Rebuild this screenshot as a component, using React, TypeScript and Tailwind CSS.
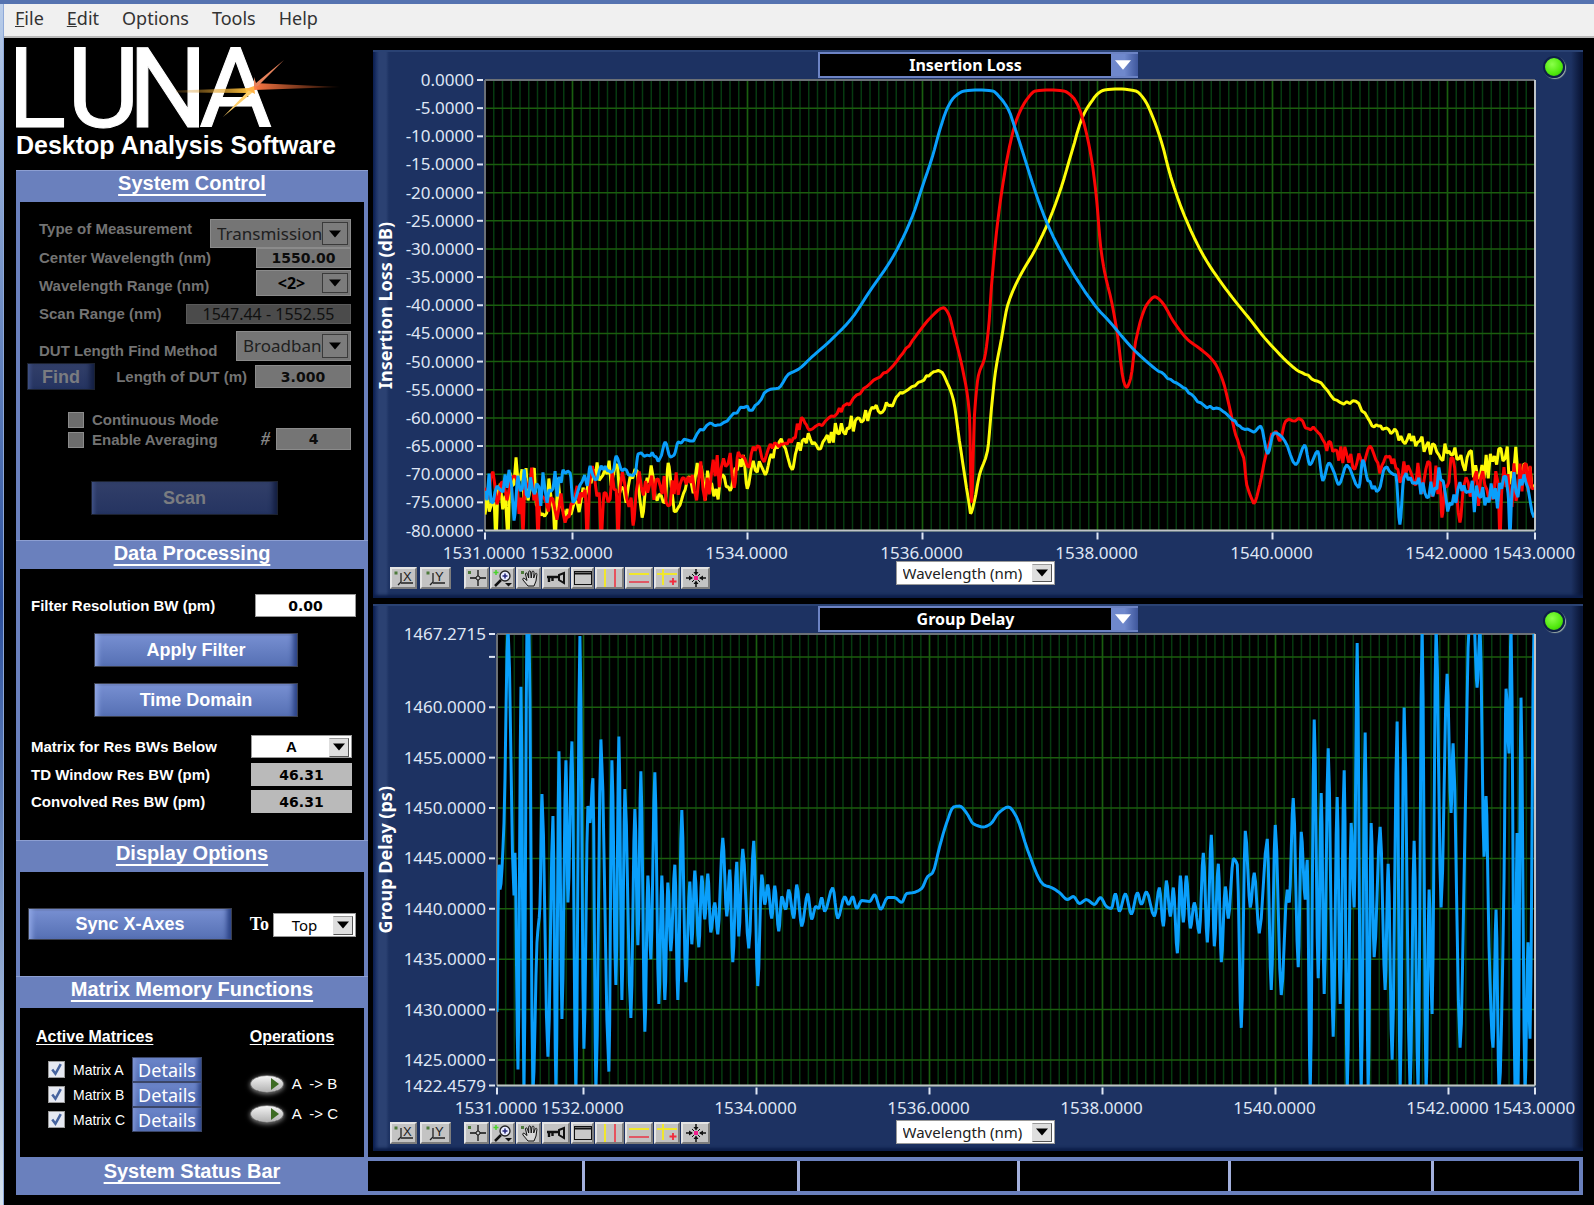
import React from "react";

type Anchor = [number, number, number?];

const BLUE = "#0a9ffb";
const RED = "#fb0505";
const YELLOW = "#fdfb08";

// Fills the space between anchors; the third value is the noise height.
// Quiet stretches are joined with a monotone cubic so peaks never overshoot.
const buildTrace = (anchors: Anchor[], seed: number) => {
  let state = seed;
  const random = () => {
    state = (state * 1103515245 + 12345) % 2147483648;
    return state / 2147483648;
  };
  const slopes = anchors.slice(1).map(([x, y], i) => (y - anchors[i][1]) / (x - anchors[i][0]));
  const tangent = (i: number) => {
    const before = slopes[i - 1];
    const after = slopes[i];
    if (before === undefined || after === undefined || before * after <= 0) return 0;
    return (2 * before * after) / (before + after);
  };
  const points: string[] = [];
  anchors.forEach(([x, y, amp = 0], index) => {
    points.push(`${x},${y}`);
    const next = anchors[index + 1];
    if (!next) return;
    const width = next[0] - x;
    const steps = amp > 2 ? Math.floor(width / 2) : Math.max(4, Math.floor(width / 3));
    for (let i = 1; i < steps; i++) {
      const t = i / steps;
      const px = x + width * t;
      const h00 = 2 * t ** 3 - 3 * t ** 2 + 1;
      const h10 = t ** 3 - 2 * t ** 2 + t;
      const h01 = -2 * t ** 3 + 3 * t ** 2;
      const h11 = t ** 3 - t ** 2;
      const smooth = h00 * y + h10 * width * tangent(index) + h01 * next[1] + h11 * width * tangent(index + 1);
      const py = smooth + (random() * 2 - 1) * amp * 1.3;
      points.push(`${px.toFixed(1)},${py.toFixed(1)}`);
    }
  });
  return points.join(" ");
};

const matrixA: Anchor[] = [
  [0, 413, 14], [22, 410, 14], [24, 392, 10], [29, 443, 0], [33, 398, 14], [60, 412, 14], [76, 405, 0],
  [78, 392, 6], [85, 395, 0], [88, 425, 0], [97, 404, 8], [102, 408, 0], [105, 388, 5], [110, 402, 5],
  [118, 392, 7], [128, 393, 0], [131, 378, 0], [137, 393, 3], [150, 395, 0], [153, 376, 2], [165, 378, 3],
  [175, 380, 0], [180, 364, 0], [185, 379, 0], [189, 377, 0], [193, 364, 2], [205, 363, 2], [225, 345, 1],
  [232, 347, 2], [245, 339, 2], [262, 328, 0], [264, 332, 1], [285, 311, 0], [293, 310, 0], [303, 296, 0],
  [313, 291, 0], [326, 279, 0], [345, 262], [366, 240], [384, 213], [408, 177], [427, 137], [437, 107],
  [447, 77], [455, 48], [462, 28], [469, 17], [479, 11], [493, 10], [507, 11], [514, 17], [523, 30],
  [530, 50], [538, 75], [550, 113], [562, 145], [574, 170], [593, 203], [612, 230], [624, 243], [639, 261],
  [650, 273], [673, 293, 1], [697, 309, 1], [718, 327, 2], [737, 333], [747, 342, 2], [756, 350, 2],
  [768, 354], [775, 348], [782, 376], [788, 355, 1], [799, 363], [810, 387], [819, 367], [824, 387],
  [832, 373], [837, 403], [843, 385], [848, 394], [853, 407], [861, 387], [873, 410], [877, 382],
  [882, 403, 3], [893, 412], [899, 390, 4], [910, 397], [914, 447], [918, 400, 9], [929, 405, 11],
  [941, 420, 11], [955, 402, 11], [964, 425, 11], [980, 415, 15], [1001, 420, 15], [1022, 415],
  [1024, 456], [1026, 415, 14], [1040, 405], [1048, 440],
];

const matrixB: Anchor[] = [
  [0, 410, 14], [20, 412, 16], [36, 420], [38, 455], [40, 400, 14], [51, 415], [53, 460], [55, 415, 12],
  [74, 430, 14], [90, 418, 10], [100, 412], [102, 460], [105, 402, 12], [114, 415], [116, 460],
  [119, 415, 14], [131, 412], [133, 460], [135, 410, 14], [146, 420], [148, 448], [152, 408, 12],
  [175, 408, 16], [205, 405, 18], [222, 400, 14], [236, 390, 12], [245, 375, 8], [249, 410], [253, 374, 8],
  [262, 388, 5], [272, 368, 6], [279, 384, 4], [285, 366, 4], [298, 366, 5], [308, 360, 6], [318, 341, 2],
  [324, 352, 2], [340, 343, 2], [352, 335, 3], [368, 320, 2], [385, 305, 1], [408, 287, 1], [427, 262],
  [446, 238], [458, 229], [463, 235], [469, 257], [479, 300], [484, 337], [486, 425], [489, 337],
  [493, 297], [499, 280], [503, 250], [506, 207], [511, 153], [517, 107], [524, 67], [531, 40], [541, 20],
  [550, 11], [564, 10], [578, 11], [587, 17], [593, 27], [600, 50], [606, 80], [611, 120], [615, 167],
  [619, 193], [626, 223], [632, 257], [638, 303], [641, 309], [645, 300], [650, 263], [659, 230],
  [664, 222], [669, 218], [676, 223], [688, 243], [702, 261], [714, 270], [728, 283], [737, 302],
  [744, 330], [750, 357, 2], [758, 380], [761, 407, 3], [768, 426], [774, 407], [780, 378, 3], [790, 353],
  [794, 363], [800, 343, 2], [816, 342], [820, 350, 2], [830, 352, 2], [839, 365, 5], [849, 372, 8],
  [861, 377, 8], [877, 386], [884, 368], [892, 385, 8], [910, 390, 12], [934, 400, 14], [954, 402],
  [956, 440], [959, 408, 16], [967, 380], [974, 445], [978, 408, 17], [1001, 412, 18], [1012, 405],
  [1014, 460], [1016, 410, 20], [1048, 410],
];

const matrixC: Anchor[] = [
  [0, 437], [2, 415, 14], [9, 425], [11, 460], [13, 415, 12], [20, 418], [23, 460], [25, 395, 16],
  [45, 412, 20], [68, 430], [70, 460], [73, 400, 16], [80, 440, 10], [92, 425, 14], [110, 400, 14],
  [128, 398, 14], [143, 410, 16], [152, 393, 10], [157, 440], [162, 400, 12], [180, 425], [183, 385],
  [187, 415, 12], [193, 430], [200, 412, 14], [218, 402, 16], [235, 402, 10], [245, 413], [250, 390, 10],
  [258, 377], [262, 411], [268, 383, 8], [280, 397], [286, 376, 8], [298, 367], [307, 392], [311, 373, 6],
  [325, 361, 4], [333, 371, 6], [342, 357, 8], [362, 350, 8], [374, 340, 6], [393, 333, 4], [405, 327, 3],
  [417, 315, 1], [436, 303, 1], [446, 295, 1], [455, 293], [462, 305], [468, 322], [474, 363],
  [481, 410, 6], [485, 436], [489, 423], [494, 397], [502, 373], [506, 330], [510, 293], [516, 260],
  [522, 227], [533, 200], [550, 170], [564, 140], [576, 107], [586, 73], [597, 37], [605, 23], [612, 14],
  [619, 10], [633, 9], [650, 11], [659, 20], [667, 37], [676, 63], [685, 97], [699, 137], [718, 177],
  [740, 210], [766, 243], [782, 263], [813, 293, 1], [832, 303, 1], [858, 326, 2], [870, 323, 2],
  [882, 340, 4], [901, 350, 4], [915, 358, 5], [934, 363, 7], [953, 377, 9], [963, 373, 10],
  [977, 387, 14], [996, 387, 12], [1017, 383, 18], [1034, 393, 14], [1048, 407],
];

const groupDelay: Anchor[] = [
  [0, 380], [1, 280], [2, 232], [3, 257], [7, 190], [11, -8], [17, 263], [18, 220], [21, 438], [24, 53],
  [27, 460], [30, -8], [32, -8], [36, 460], [40, 310], [43, 273], [45, 161], [51, 425], [56, 183],
  [59, 460], [62, 118], [65, 387], [69, 127], [71, 270], [75, 108], [79, 460], [83, 2], [87, 417],
  [91, 173], [93, 190], [96, 145], [99, 460], [104, 106], [112, 440], [115, 127], [119, 353], [122, 103],
  [125, 368], [128, 156], [134, 386], [138, 176], [141, 313], [144, 138], [148, 400], [151, 243],
  [154, 327], [158, 139], [162, 372], [165, 243], [168, 368], [171, 250], [174, 319], [178, 232],
  [181, 368], [185, 177], [189, 350], [193, 249], [195, 312], [198, 238], [202, 315], [205, 243],
  [208, 287], [211, 241], [214, 300], [218, 270], [221, 302], [226, 205], [230, 284], [233, 237],
  [236, 330], [240, 229], [242, 304], [246, 216], [252, 316], [257, 208], [261, 354], [265, 242],
  [268, 272], [271, 252], [275, 286], [278, 253], [282, 299], [285, 264], [289, 277], [292, 257],
  [297, 286], [300, 252], [305, 294], [311, 261], [315, 287], [319, 274], [322, 276], [325, 265],
  [328, 279], [336, 255], [341, 286], [348, 264], [352, 272], [356, 264], [360, 276], [365, 268],
  [373, 269], [378, 262], [384, 277], [391, 265], [398, 265], [405, 270], [410, 261], [417, 260],
  [425, 256], [431, 244], [436, 240], [443, 214], [450, 190], [457, 174], [463, 173], [470, 180],
  [477, 191], [487, 194], [494, 191], [502, 180], [512, 174], [520, 184], [531, 217], [547, 252],
  [555, 255], [563, 260], [571, 267], [577, 264], [583, 271], [590, 267], [598, 272], [604, 265],
  [610, 274], [615, 276], [619, 261], [623, 279], [629, 261], [635, 282], [641, 260], [645, 272],
  [650, 259], [658, 284], [663, 255], [667, 294], [670, 248], [674, 284], [677, 255], [681, 321],
  [684, 243], [687, 290], [690, 243], [694, 296], [698, 270], [703, 301], [707, 220], [711, 310],
  [715, 202], [718, 314], [722, 231], [725, 330], [729, 254], [732, 286], [737, 226], [741, 232],
  [745, 396], [749, 198], [754, 275], [758, 240], [763, 301], [771, 206], [775, 358], [779, 192],
  [785, 363], [791, 257], [793, 270], [797, 165], [802, 335], [805, 199], [809, 267], [811, 227],
  [814, 460], [818, 86], [822, 346], [825, 160], [828, 362], [832, 115], [837, 405], [841, 164],
  [844, 372], [848, 137], [851, 460], [855, 190], [858, 275], [861, 9], [865, 460], [869, 99], [872, 460],
  [875, 190], [878, 325], [884, 194], [889, 358], [892, 231], [896, 428], [901, 88], [904, 460],
  [908, 74], [914, 460], [918, 208], [922, 460], [926, -8], [930, 460], [933, 257], [936, 382],
  [940, -8], [945, 275], [951, 40], [955, 180], [957, 110], [964, 416], [969, 190], [973, -8], [978, -8],
  [981, 54], [984, -8], [988, 224], [990, 163], [993, 315], [997, 416], [1000, 277], [1003, 460],
  [1008, 247], [1010, 55], [1013, 120], [1015, -8], [1019, 460], [1021, 200], [1022, 460], [1025, 64],
  [1029, 460], [1032, 310], [1034, 407], [1038, -8],
];

const wavelengths = [1531, 1532, 1534, 1536, 1538, 1540, 1542, 1543];
const minorLines = Array.from({ length: 119 }, (_, i) => ((i + 1) / 120) * 100);

/* ---------- Controls ---------- */

const Arrow = ({ className = "" }: { className?: string }) => (
  <svg viewBox="0 0 12 8" className={`h-2 w-3 ${className}`} fill="currentColor">
    <path d="M0 0.5h12L6 7.5z" />
  </svg>
);

type DropDownProps = {
  id: string;
  value: string;
  label?: string;
  box: string;
  text: string;
  arrow: string;
  disabled?: boolean;
};

const DropDown = ({ id, value, label, box, text, arrow, disabled }: DropDownProps) => (
  <div className={`grid ${box}`}>
    <select
      id={id}
      aria-label={label}
      disabled={disabled}
      defaultValue={value}
      className={`col-start-1 row-start-1 w-full min-w-0 appearance-none disabled:opacity-100 ${text}`}
    >
      <option>{value}</option>
    </select>
    <span
      className={`pointer-events-none col-start-1 row-start-1 m-0.5 flex items-center justify-center justify-self-end border ${arrow}`}
    >
      <Arrow />
    </span>
  </div>
);

const BlueButton = ({ children, className = "" }: { children: React.ReactNode; className?: string }) => (
  <button
    type="button"
    className={`border border-[#3b3f4c] bg-linear-to-b from-[#7890d2] to-[#5670b4] text-lg leading-6 font-bold text-white shadow-[inset_7px_0_5px_-4px_#8fa6e4,inset_-7px_0_5px_-3px_#2c4386,inset_0_2px_0_#7288c4] ${className}`}
  >
    {children}
  </button>
);

const DimButton = ({ children, className = "" }: { children: React.ReactNode; className?: string }) => (
  <button
    type="button"
    disabled
    className={`border border-[#1c2230] bg-linear-to-b from-[#323f69] to-[#253461] text-lg leading-6 font-bold text-[#7a7c80] shadow-[inset_6px_0_4px_-4px_#43558a,inset_-7px_0_5px_-3px_#141f42] ${className}`}
  >
    {children}
  </button>
);

const SectionTitle = ({ children, className = "h-8" }: { children: React.ReactNode; className?: string }) => (
  <h2
    className={`border-t border-[#8d9fd2] bg-[#6a80bd] text-center text-xl leading-6 font-bold text-white underline decoration-2 underline-offset-4 ${className}`}
  >
    {children}
  </h2>
);

/* ---------- Sidebar ---------- */

const Logo = () => (
  <svg viewBox="0 0 330 84" className="h-[84px] w-[330px]" role="img" aria-label="Luna">
    <defs>
      <linearGradient id="flareLeft" x1="0" x2="1">
        <stop offset="0" stopColor="#c98a2a" stopOpacity="0.2" />
        <stop offset="1" stopColor="#ffc23c" />
      </linearGradient>
      <linearGradient id="flareRight" x1="0" x2="1">
        <stop offset="0" stopColor="#ff7a45" />
        <stop offset="1" stopColor="#b04a20" stopOpacity="0.2" />
      </linearGradient>
    </defs>
    <text x="-10 51 112 183" y="82" fontFamily="Roboto, sans-serif" fontSize="112" fill="#fff" stroke="#fff">
      LUNA
    </text>
    <path d="M160 45.500L235 43v5l-75-.5z" fill="url(#flareLeft)" />
    <path d="M207 72l27-28 3 3z" fill="#ffcf6a" />
    <path d="M238 38l86 4-86 3z" fill="url(#flareRight)" />
    <path d="M238 42V32l2 6 28-23-26 26z" fill="#e8835c" />
    <path d="M230 44l8-3 1 8z" fill="#ffb347" />
  </svg>
);

const dimLabel = "text-[15px] leading-5 font-bold text-[#737373]";
const label = "text-[15px] leading-5 font-bold text-white";
const dimSelect = "border border-[#8b8b8b] bg-[#757575] font-['Noto_Sans',sans-serif]";
const dimArrow = "w-[26px] border-[#3a3a3a] bg-[#7c7c7c] text-black";
const lightArrow = "w-5 border-l-transparent border-t-[#999] border-r-[#555] border-b-[#555] bg-[#dedede] text-black";
const dimInput =
  "min-w-0 border border-[#8b8b8b] bg-[#757575] text-center font-['DejaVu_Sans',sans-serif] text-sm font-bold text-[#0c0c0c]";
const resultInput =
  "h-[23px] w-[101px] bg-[#bababa] text-center font-['DejaVu_Sans',sans-serif] text-sm font-bold text-black";

const SystemControl = () => (
  <section>
    <SectionTitle>System Control</SectionTitle>
    <div className="mx-1 flex h-[338px] flex-col bg-black pt-[17px] pr-[13px] pl-[7px]">
      <div className="flex justify-between pl-3">
        <label htmlFor="type" className={dimLabel}>
          Type of Measurement
        </label>
        <DropDown
          id="type"
          value="Transmission"
          disabled
          box={`h-[29px] w-[141px] ${dimSelect}`}
          text="pl-1.5 text-[17px] text-[#202020]"
          arrow={dimArrow}
        />
      </div>
      <div className="flex items-center justify-between pl-3">
        <label htmlFor="center" className={dimLabel}>
          Center Wavelength (nm)
        </label>
        <input id="center" disabled defaultValue="1550.00" className={`${dimInput} h-5 w-[95px]`} />
      </div>
      <div className="mt-0.5 flex items-end justify-between pl-3">
        <label htmlFor="range" className={dimLabel}>
          Wavelength Range (nm)
        </label>
        <DropDown
          id="range"
          value="<2>"
          disabled
          box={`h-[26px] w-[95px] ${dimSelect}`}
          text="pr-6 text-center text-[16px] font-bold text-black"
          arrow={dimArrow}
        />
      </div>
      <div className="mt-2 flex items-center justify-between pl-3">
        <label htmlFor="scan-range" className={dimLabel}>
          Scan Range (nm)
        </label>
        <input
          id="scan-range"
          disabled
          defaultValue="1547.44 - 1552.55"
          className="h-5 w-[165px] border border-[#5a5a5a] bg-[#4b4b4b] text-center font-['Noto_Sans',sans-serif] text-base text-[#101010]"
        />
      </div>
      <div className="mt-[7px] flex items-end justify-between pl-3">
        <label htmlFor="dut" className={dimLabel}>
          DUT Length Find Method
        </label>
        <DropDown
          id="dut"
          value="Broadband"
          disabled
          box={`h-[30px] w-[115px] ${dimSelect}`}
          text="pl-1.5 text-[17px] text-[#202020]"
          arrow={dimArrow}
        />
      </div>
      <div className="mt-0.5 flex items-center justify-between">
        <DimButton className="h-[27px] w-[68px]">Find</DimButton>
        <label htmlFor="length" className={`${dimLabel} ml-auto pr-2`}>
          Length of DUT (m)
        </label>
        <input id="length" disabled defaultValue="3.000" className={`${dimInput} h-[23px] w-24`} />
      </div>
      <div className="mt-5 flex items-end justify-between pl-[41px]">
        <div className="flex flex-col">
          <label className={`flex items-center gap-2 ${dimLabel}`}>
            <input type="checkbox" disabled className="size-4 appearance-none border border-[#8b8b8b] bg-[#6c6c6c]" />
            Continuous Mode
          </label>
          <label className={`flex items-center gap-2 ${dimLabel}`}>
            <input type="checkbox" disabled className="size-4 appearance-none border border-[#8b8b8b] bg-[#6c6c6c]" />
            Enable Averaging
          </label>
        </div>
        <div className="flex items-center gap-1.5">
          <label htmlFor="count" className="font-['Liberation_Serif',serif] text-lg leading-5 font-bold text-[#858585] italic">
            #
          </label>
          <input id="count" disabled defaultValue="4" className={`${dimInput} h-[22px] w-[75px]`} />
        </div>
      </div>
      <DimButton className="mt-[31px] ml-16 h-[34px] w-[187px]">Scan</DimButton>
    </div>
  </section>
);

const DataProcessing = () => (
  <section>
    <SectionTitle className="h-[29px]">Data Processing</SectionTitle>
    <div className="mx-1 flex h-[271px] flex-col bg-black pt-[25px] pr-3 pl-[11px]">
      <div className="flex items-center justify-between">
        <label htmlFor="filter-bw" className={label}>
          Filter Resolution BW (pm)
        </label>
        <input
          id="filter-bw"
          defaultValue="0.00"
          className="-mr-1 h-[23px] w-[101px] border border-[#999] bg-white text-center font-['DejaVu_Sans',sans-serif] text-sm font-bold text-black"
        />
      </div>
      <BlueButton className="mt-4 ml-[63px] h-[34px] w-[204px]">Apply Filter</BlueButton>
      <BlueButton className="mt-4 ml-[63px] h-[34px] w-[204px]">Time Domain</BlueButton>
      <div className="mt-[18px] flex items-center justify-between">
        <label htmlFor="matrix" className={label}>
          Matrix for Res BWs Below
        </label>
        <DropDown
          id="matrix"
          value="A"
          box="h-[23px] w-[101px] border border-[#999] bg-white"
          text="pr-5 text-center text-[15px] font-bold text-black"
          arrow={lightArrow}
        />
      </div>
      <div className="mt-[5px] flex items-center justify-between">
        <label htmlFor="td-bw" className={label}>
          TD Window Res BW (pm)
        </label>
        <input id="td-bw" readOnly value="46.31" className={resultInput} />
      </div>
      <div className="mt-1 flex items-center justify-between">
        <label htmlFor="conv-bw" className={label}>
          Convolved Res BW (pm)
        </label>
        <input id="conv-bw" readOnly value="46.31" className={resultInput} />
      </div>
    </div>
  </section>
);

const DisplayOptions = () => (
  <section>
    <SectionTitle>Display Options</SectionTitle>
    <div className="mx-1 flex h-[104px] items-center bg-black pr-2 pl-2">
      <BlueButton className="h-8 w-[204px]">Sync X-Axes</BlueButton>
      <label htmlFor="sync-to" className="ml-auto pr-1 font-['Liberation_Serif',serif] text-lg font-bold text-white">
        To
      </label>
      <DropDown
        id="sync-to"
        value="Top"
        box="mt-0.5 h-6 w-[83px] border border-[#999] bg-white"
        text="pr-5 text-center font-['Noto_Sans',sans-serif] text-[15px] text-black"
        arrow={lightArrow}
      />
    </div>
  </section>
);

const Operation = ({ name }: { name: string }) => (
  <label className="flex items-center gap-2 text-[15px] leading-[30px] whitespace-pre text-white">
    <button
      type="button"
      aria-label={name}
      className="flex h-[18px] w-[34px] items-center justify-end rounded-[50%] border border-[#777] bg-linear-to-b from-[#f4f4f4] to-[#b2b2b2] pr-1 shadow-[0_1px_5px_#888]"
    >
      <svg viewBox="0 0 8 12" className="h-3 w-2" fill="#3c6b22">
        <path d="M0 0l8 6-8 6z" />
      </svg>
    </button>
    {name}
  </label>
);

const MatrixMemory = () => (
  <section>
    <SectionTitle>Matrix Memory Functions</SectionTitle>
    <div className="mx-1 flex h-[149px] justify-between bg-black pt-[17px] pr-[26px] pl-4">
      <div>
        <h3 className="text-base leading-6 font-bold text-white underline underline-offset-2">Active Matrices</h3>
        <ul className="mt-2 pl-3">
          {["A", "B", "C"].map((name) => (
            <li key={name} className="flex items-center">
              <label className="flex items-center gap-2 text-sm whitespace-nowrap text-white">
                <span className="grid">
                  <input
                    type="checkbox"
                    defaultChecked
                    className="col-start-1 row-start-1 size-[17px] appearance-none border border-[#9a9a9a] bg-[#e6e9f2]"
                  />
                  <svg
                    viewBox="0 0 16 16"
                    className="pointer-events-none col-start-1 row-start-1 size-[17px]"
                    fill="none"
                    stroke="#46639f"
                    strokeWidth="2.4"
                  >
                    <path d="M4 8l3 4 5-9" />
                  </svg>
                </span>
                <span className="w-[53px]">Matrix {name}</span>
              </label>
              <button
                type="button"
                className="ml-1.5 h-[25px] w-[70px] border border-[#3b4668] bg-linear-to-b from-[#6d86ca] to-[#526cb2] font-['Noto_Sans',sans-serif] text-lg leading-5 text-white shadow-[inset_4px_0_4px_-2px_#8197d6,inset_-5px_0_4px_-2px_#2f4789]"
              >
                Details
              </button>
            </li>
          ))}
        </ul>
      </div>
      <div>
        <h3 className="text-base leading-6 font-bold text-white underline underline-offset-2">Operations</h3>
        <div className="mt-5">
          <Operation name="A  -> B" />
          <Operation name="A  -> C" />
        </div>
      </div>
    </div>
  </section>
);

/* ---------- Graphs ---------- */

const toolClass =
  "h-[22px] border-2 border-t-[#e4e4e4] border-l-[#e4e4e4] border-r-[#7d7d7d] border-b-[#7d7d7d] bg-[#c3c3c3] flex items-center justify-center";

const AxisIcon = ({ axis }: { axis: string }) => (
  <svg viewBox="0 0 22 18" className="h-[18px] w-[22px]" fill="none" stroke="#222" strokeWidth="1.300">
    <rect x="1.500" y="2.500" width="3" height="3" fill="#4d7a3a" stroke="none" />
    <path d="M8 4v9M5 16l3-3M8 14h12" />
    <text x="10" y="12" fontSize="13" fontFamily="Liberation Sans, sans-serif" fill="#222" stroke="none">
      {axis}
    </text>
  </svg>
);

const tools: { name: string; width: string; icon: React.ReactNode }[] = [
  {
    name: "Cursor",
    width: "w-[25px]",
    icon: (
      <>
        <rect x="1" y="2" width="3" height="3" fill="#4d7a3a" />
        <path d="M11 1v16M3 9h16" stroke="#111" strokeWidth="1.300" />
        <circle cx="11" cy="9" r="2" fill="#c3c3c3" stroke="#111" />
      </>
    ),
  },
  {
    name: "Zoom",
    width: "w-[25px]",
    icon: (
      <>
        <path d="M3 1v5M0.500 3.500h5" stroke="#4ad32c" strokeWidth="1.500" />
        <path d="M8 11l-6 6" stroke="#111" strokeWidth="2.500" />
        <circle cx="12" cy="7" r="5" fill="#e8ebff" stroke="#222" strokeWidth="1.300" />
        <path d="M12 4.500v5M9.500 7h5" stroke="#22267a" strokeWidth="1.500" />
        <path d="M12 14h7l-3.500 3.500z" fill="#111" />
      </>
    ),
  },
  {
    name: "Pan",
    width: "w-[25px]",
    icon: (
      <>
        <rect x="2" y="2" width="3" height="3" fill="#4d7a3a" />
        <path
          d="M9 17l-5-6c-1-1.500.5-2.500 1.800-1.300L8 11.500 6.500 5c0-1.500 1.500-1.500 2 0l1.200 4L9.700 3c0-1.500 1.800-1.500 2 0l.5 6 .8-6c.2-1.300 2-1.200 2 .3L14.700 9l1.500-4c.5-1.300 2-.8 1.700.5L17 12l-2 5z"
          fill="#d6d6d6"
          stroke="#111"
        />
      </>
    ),
  },
  {
    name: "Lock",
    width: "w-[28px]",
    icon: (
      <>
        <path d="M1 8h13M3 8v5M6.500 8v4" stroke="#111" strokeWidth="2.400" />
        <path d="M13 6l5-2v10l-5-3z" fill="#c3c3c3" stroke="#111" strokeWidth="2" />
      </>
    ),
  },
  {
    name: "Window",
    width: "w-[23px]",
    icon: (
      <>
        <rect x="1.500" y="2.500" width="17" height="13" fill="#c9c9c9" stroke="#111" />
        <path d="M1 4.500h18" stroke="#111" strokeWidth="2" />
      </>
    ),
  },
  {
    name: "Vertical cursors",
    width: "w-[29px]",
    icon: (
      <>
        <path d="M5 0v18" stroke="#f0e72c" strokeWidth="2" />
        <path d="M15 0v18" stroke="#f22c3c" strokeWidth="1.500" />
      </>
    ),
  },
  {
    name: "Horizontal cursors",
    width: "w-[28px]",
    icon: (
      <>
        <path d="M0 5h20" stroke="#f0e72c" strokeWidth="2" />
        <path d="M0 13h20" stroke="#e83546" strokeWidth="1.500" />
      </>
    ),
  },
  {
    name: "Add cursor",
    width: "w-[26px]",
    icon: (
      <>
        <path d="M0 5h20M6 0v16" stroke="#f0e72c" strokeWidth="2" />
        <path d="M16 9v7M12.500 12.500h7" stroke="#f22c3c" strokeWidth="1.800" />
      </>
    ),
  },
  {
    name: "Center cursor",
    width: "w-[29px]",
    icon: (
      <>
        <path d="M10 0v5M10 13v5M0 9h6M14 9h6" stroke="#111" strokeWidth="1.500" />
        <path d="M7.500 3h5L10 6.500zM7.500 15h5L10 11.500zM3 6.500v5L7 9zM17 6.500v5L13 9z" fill="#111" />
        <path d="M6 5l8 8M14 5l-8 8" stroke="#111" />
        <rect x="8" y="7" width="4" height="4" fill="#f0208c" />
      </>
    ),
  },
];

type GraphProps = {
  id: string;
  title: string;
  axisLabel: string;
  top: number;
  bottom: number;
  yTicks: number[];
  hiddenTick?: number;
  frame: string;
  traces: { color: string; points: string }[];
  gutter: string;
  toolRow: string;
  toolPad: string;
};

const Graph = (props: GraphProps) => {
  const { id, title, axisLabel, top, bottom, yTicks, hiddenTick, frame, traces, gutter, toolRow, toolPad } = props;
  const yPos = (value: number) => `${((top - value) / (top - bottom)) * 100}%`;
  const xPos = (value: number) => `${((value - 1531) / 12) * 100}%`;

  return (
    <section className="flex min-h-[360px] flex-1 flex-col border-t-2 border-[#2a4273] bg-[linear-gradient(90deg,#0b1f54_0px,#2b4172_6px,#2b4172_13px,#1d3262_16px,#1d3262_calc(100%-12px),#06102e_100%)] shadow-[inset_0_-3px_3px_#0c1e4a]">
      <div className="grid h-[28px] grid-cols-[1fr_auto_1fr] items-start">
        <div className="col-start-2 grid h-[26px] w-80 border-t-2 border-b-2 border-l-2 border-[#6c83c4] bg-[#5d75b9]">
          <select
            aria-label={`${id} graph`}
            defaultValue={title}
            className="col-start-1 row-start-1 mr-[27px] appearance-none bg-black text-center font-['Noto_Sans',sans-serif] text-base leading-5 font-bold text-white"
          >
            <option>{title}</option>
          </select>
          <span className="pointer-events-none col-start-1 row-start-1 flex w-[27px] items-center justify-center justify-self-end bg-linear-to-r from-[#6f88cc] via-[#6f88cc] to-[#3f579c] pr-1">
            <Arrow className="h-3 w-4 text-white" />
          </span>
        </div>
        <span className="mt-1 mr-[18px] size-[22px] justify-self-end rounded-full border-2 border-[#0e1f49] bg-[radial-gradient(circle_at_40%_35%,#8bff4a,#4fe80c_60%,#2fae08)] shadow-[1px_1px_1px_#9fb0a8]" />
      </div>
      <div className="flex flex-1 pr-12 pl-[3px]">
        <div className="flex w-[18px] items-center justify-center">
          <span className="rotate-180 font-['Noto_Sans',sans-serif] text-lg leading-[18px] font-bold whitespace-nowrap text-white [writing-mode:vertical-rl]">
            {axisLabel}
          </span>
        </div>
        <svg
          className={`h-auto min-w-0 flex-1 overflow-visible ${gutter}`}
          fontFamily="Noto Sans, sans-serif"
          fontSize="17"
          fill="#dfe6f5"
        >
          <rect width="100%" height="100%" fill="#000" />
          {minorLines.map((x) => (
            <line key={x} x1={`${x}%`} x2={`${x}%`} y1="0" y2="100%" stroke="#063a10" strokeWidth="1.500" />
          ))}
          {yTicks.map((tick) => (
            <line key={tick} x1="0" x2="100%" y1={yPos(tick)} y2={yPos(tick)} stroke="#1b5d0e" strokeWidth="1.500" />
          ))}
          {wavelengths.map((tick) => (
            <line key={tick} x1={xPos(tick)} x2={xPos(tick)} y1="0" y2="100%" stroke="#1b5d0e" strokeWidth="1.500" />
          ))}
          <line x2="100%" stroke="#6b7076" strokeWidth="2" />
          <line y2="100%" stroke="#6b7076" strokeWidth="2" />
          <svg width="100%" height="100%" viewBox={frame} preserveAspectRatio="none">
            {traces.map((trace) => (
              <polyline
                key={trace.color}
                points={trace.points}
                fill="none"
                stroke={trace.color}
                strokeWidth="3"
                strokeLinejoin="bevel"
                vectorEffect="non-scaling-stroke"
              />
            ))}
          </svg>
          <line y1="100%" x2="100%" y2="100%" stroke="#bfc3c7" strokeWidth="2" />
          <line x1="100%" x2="100%" y2="100%" stroke="#bfc3c7" strokeWidth="2" />
          {yTicks.map((tick) => (
            <React.Fragment key={tick}>
              <line x1="-8" x2="-2" y1={yPos(tick)} y2={yPos(tick)} stroke="#dfe6f5" strokeWidth="2" />
              {tick !== hiddenTick && (
                <text x="-11" y={yPos(tick)} dy="6" textAnchor="end">
                  {tick.toFixed(4)}
                </text>
              )}
            </React.Fragment>
          ))}
          {wavelengths.map((tick) => (
            <svg key={tick} x={xPos(tick)} y="100%" className="overflow-visible">
              <line y1="2" y2="9" stroke="#dfe6f5" strokeWidth="2" />
              <text y="28" x="-1" textAnchor="middle">
                {tick.toFixed(4)}
              </text>
            </svg>
          ))}
        </svg>
      </div>
      <div className={`grid grid-cols-[1fr_auto_1fr] items-start pl-[17px] ${toolRow}`}>
        <div className={`flex ${toolPad}`}>
          <button type="button" aria-label="Autoscale X" className={`${toolClass} w-[27px]`}>
            <AxisIcon axis="X" />
          </button>
          <button type="button" aria-label="Autoscale Y" className={`${toolClass} ml-[3px] w-[31px]`}>
            <AxisIcon axis="Y" />
          </button>
          <div className="ml-[13px] flex gap-px">
            {tools.map((tool) => (
              <button
                key={tool.name}
                type="button"
                aria-label={tool.name}
                className={`${toolClass} ${tool.width} ${tool.name === "Zoom" ? "border-[#6a6a6a] bg-[#7d7d7d]" : ""}`}
              >
                <svg viewBox="0 0 20 18" className="h-[18px] w-5 shrink-0" fill="none">
                  {tool.icon}
                </svg>
              </button>
            ))}
          </div>
        </div>
        <DropDown
          id={`${id}-unit`}
          value="Wavelength (nm)"
          label="X axis unit"
          box="mr-[23px] h-6 w-[159px] border border-[#999] bg-white"
          text="pl-1.5 font-['Noto_Sans',sans-serif] text-[15px] text-[#222]"
          arrow={lightArrow}
        />
      </div>
    </section>
  );
};

const insertionTicks = Array.from({ length: 17 }, (_, i) => (i === 0 ? 0 : i * -5));
const delayTicks = [1467.2715, 1465, 1460, 1455, 1450, 1445, 1440, 1435, 1430, 1425, 1422.4579];

const insertionTraces = [
  { color: YELLOW, points: buildTrace(matrixC, 7) },
  { color: RED, points: buildTrace(matrixB, 23) },
  { color: BLUE, points: buildTrace(matrixA, 91) },
];
const delayTraces = [{ color: BLUE, points: buildTrace(groupDelay, 1) }];

const App = () => {
  return (
    <div className="flex min-h-screen flex-col border-t-4 border-[#5573b0] bg-black font-['Liberation_Sans',Arial,sans-serif]">
      <div className="flex flex-1">
        {/* Window edge */}
        <div className="w-1 border-r border-[#8fa9d8] bg-linear-to-b from-[#b9cdea] via-[#2c4f9c] to-[#d7e3ee]" />
        <div className="flex min-w-0 flex-1 flex-col">
          {/* Menu */}
          <nav className="flex h-[34px] gap-[23px] border-b-2 border-[#b9b9b9] bg-[#f0f0f0] pb-1 pl-[11px] font-['Noto_Sans',sans-serif] text-lg leading-7 text-[#333]">
            <button type="button">
              <u>F</u>ile
            </button>
            <button type="button">
              <u>E</u>dit
            </button>
            <button type="button">Options</button>
            <button type="button">Tools</button>
            <button type="button">Help</button>
          </nav>

          <main className="flex flex-1 pr-[11px] pb-2.5 pl-3">
            {/* Sidebar */}
            <aside className="flex w-[352px] shrink-0 flex-col">
              <header className="h-[132px] pt-[7px]">
                <Logo />
                <h1 className="text-[25px] leading-8 font-bold whitespace-nowrap text-white">Desktop Analysis Software</h1>
              </header>
              <div className="flex flex-1 flex-col bg-[#6a80bd]">
                <SystemControl />
                <DataProcessing />
                <DisplayOptions />
                <MatrixMemory />
                <SectionTitle className="border-t-0 pt-0.5">System Status Bar</SectionTitle>
              </div>
            </aside>

            {/* Graphs */}
            <div className="flex min-w-0 flex-1 flex-col pt-3">
              <div className="ml-[5px] flex flex-1 flex-col gap-1.5">
                <Graph
                  id="top"
                  title="Insertion Loss"
                  axisLabel="Insertion Loss (dB)"
                  top={0}
                  bottom={-80}
                  yTicks={insertionTicks}
                  frame="0 0 1049 453"
                  traces={insertionTraces}
                  gutter="ml-[91px]"
                  toolRow="mt-[30px] pb-[9px]"
                  toolPad="pt-1.5"
                />
                <Graph
                  id="bottom"
                  title="Group Delay"
                  axisLabel="Group Delay (ps)"
                  top={1467.2715}
                  bottom={1422.4579}
                  yTicks={delayTicks}
                  hiddenTick={1465}
                  frame="0 0 1039 454"
                  traces={delayTraces}
                  gutter="ml-[103px]"
                  toolRow="mt-[35px] pb-[7px]"
                  toolPad="pt-0.5"
                />
              </div>
              <div className="mt-1.5 grid h-[38px] grid-cols-[217fr_215fr_221fr_211fr_203fr_145fr] border-y-4 border-r-4 border-[#6a80bd]">
                <div className="border-r-3 border-[#a3b0dc]" />
                <div className="border-r-3 border-[#a3b0dc]" />
                <div className="border-r-3 border-[#a3b0dc]" />
                <div className="border-r-3 border-[#a3b0dc]" />
                <div className="border-r-3 border-[#a3b0dc]" />
                <div />
              </div>
            </div>
          </main>
        </div>
      </div>
    </div>
  );
};

export default App;
